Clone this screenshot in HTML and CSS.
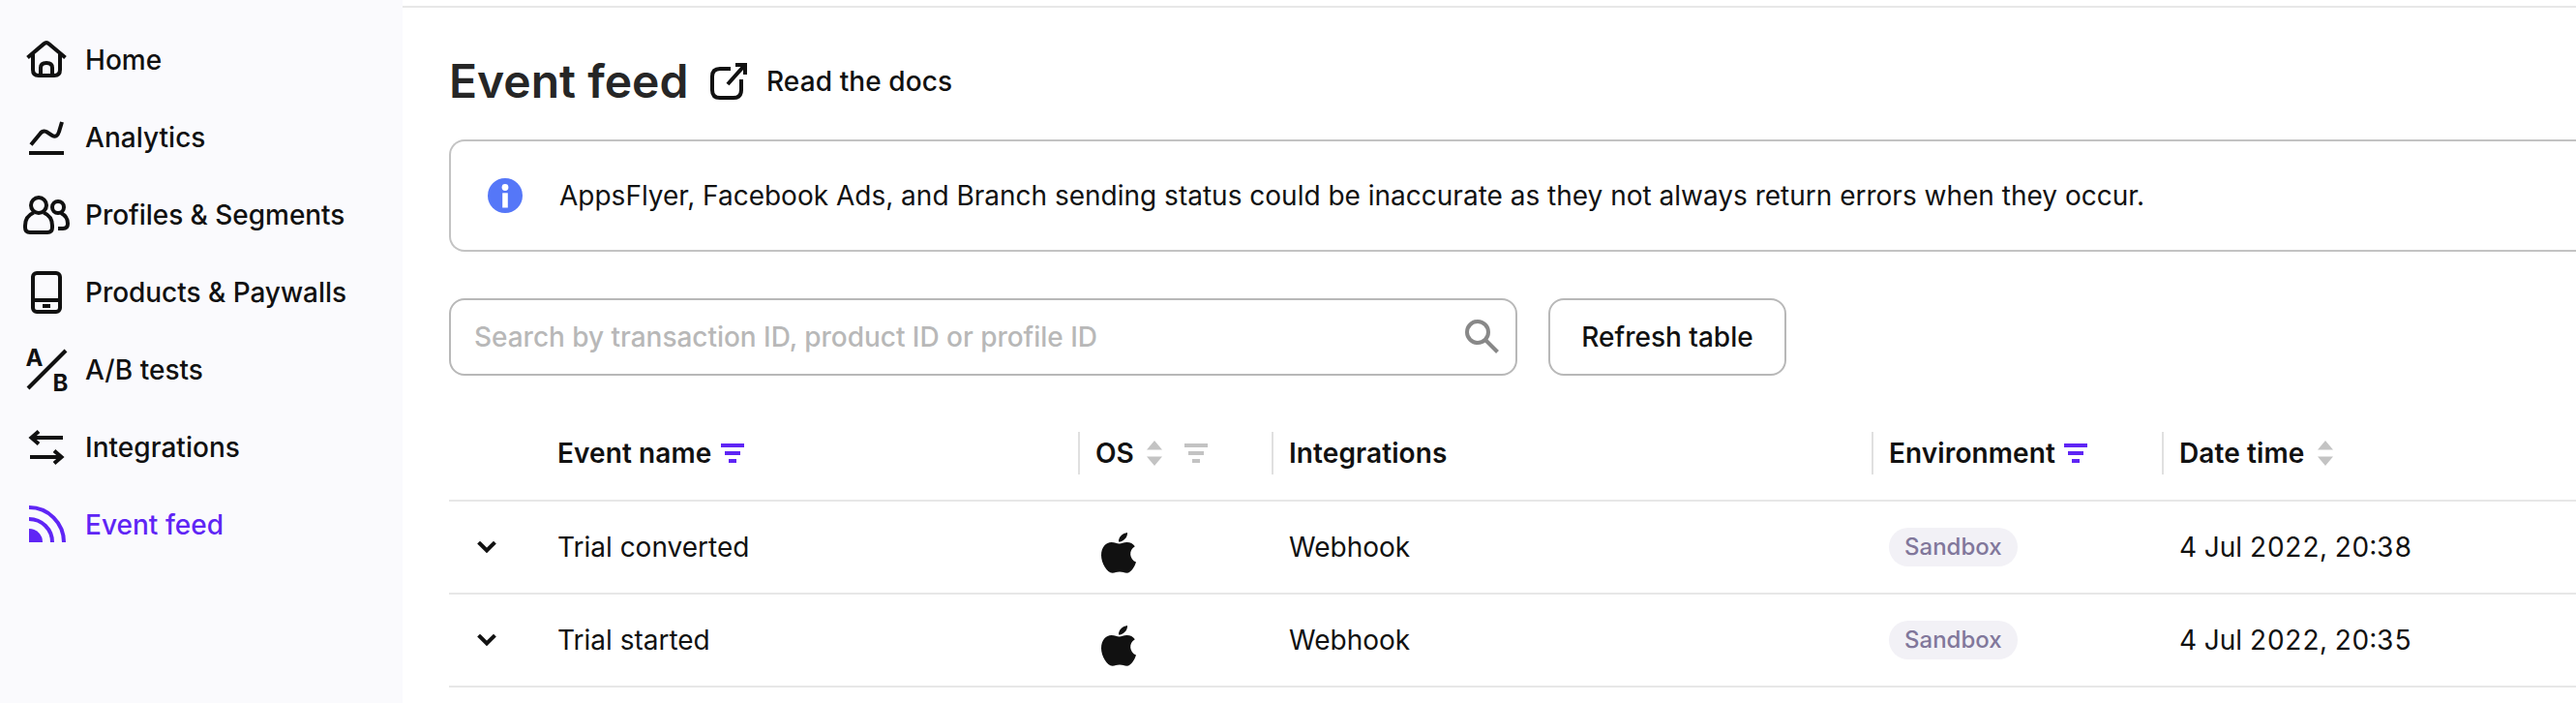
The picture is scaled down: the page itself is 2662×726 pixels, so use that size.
FILE: index.html
```html
<!DOCTYPE html>
<html lang="en">
<head>
<meta charset="utf-8">
<title>Event feed</title>
<link rel="stylesheet" href="styles.css">
</head>
<body>
<div class="app">
  <nav class="sidebar">
    <a class="nav-item"><svg class="nav-icon" viewBox="0 0 48 48"><path d="M4.500 21.500 21.200 7.400Q24 5 26.800 7.400L43.500 21.500M10 18V34Q10 40 16 40H32Q38 40 38 34V18M18 40V32Q18 27 24 27T30 32V40"/></svg><span>Home</span></a>
    <a class="nav-item"><svg class="nav-icon" viewBox="0 0 48 48"><path d="M8 31.500 17.500 20Q20 16.500 24 18L30 22Q35 24.500 37 18L40 8M6 40H42"/></svg><span>Analytics</span></a>
    <a class="nav-item"><svg class="nav-icon" viewBox="0 0 48 48"><circle cx="16" cy="14" r="8"/><circle cx="36" cy="16" r="6"/><path d="M11 21.500C5 24 2 29 2 35V37Q2 42 7 42H25Q30 42 30 37V35C30 29 27 24 21 21.500M39 22C43 24 46 28 46 33Q46 38 41 38H36"/></svg><span class="tight">Profiles &amp; Segments</span></a>
    <a class="nav-item"><svg class="nav-icon" viewBox="0 0 48 48"><rect x="10" y="4" width="28" height="40" rx="4"/><path d="M10 32H38M20 38H28"/></svg><span class="tight">Products &amp; Paywalls</span></a>
    <a class="nav-item"><svg class="nav-icon" viewBox="0 0 48 48"><path d="M5 43 44 4"/><text class="ab" x="2.500" y="20">A</text><text class="ab" x="30.500" y="46">B</text></svg><span>A/B tests</span></a>
    <a class="nav-item"><svg class="nav-icon" viewBox="0 0 48 48"><path d="M8 14H41M16 7.500 8.500 14 16 20.500M7 34H40M32 27.500 39.500 34 32 40.500"/></svg><span>Integrations</span></a>
    <a class="nav-item active"><svg class="nav-icon" viewBox="0 0 48 48"><path d="M6 6A36 36 0 0 1 42 42M6 18A24 24 0 0 1 30 42"/><path class="solid" d="M6 28A14 14 0 0 1 20 42H6Z"/></svg><span>Event feed</span></a>
  </nav>
  <main class="main">
    <header class="page-head">
      <h1 class="title">Event feed</h1>
      <a class="docs"><svg class="docs-icon" viewBox="0 0 38 38"><path d="M21 6H10Q2 6 2 14V28Q2 36 10 36H24Q32 36 32 28V17M18 22 35 3M26 2H36V12"/></svg><span>Read the docs</span></a>
    </header>
    <section class="notice">
      <svg class="info" viewBox="0 0 36 36"><circle class="info-bg" cx="18" cy="18" r="18"/><circle cx="18" cy="9.500" r="3.400" fill="#fff"/><path d="M15.200 15.300H20.800V30.500H15.200Z" fill="#fff"/></svg>
      <span class="notice-text">AppsFlyer, Facebook Ads, and Branch sending status could be inaccurate as they not always return errors when they occur.</span>
    </section>
    <div class="toolbar">
      <div class="search"><span class="placeholder">Search by transaction ID, product ID or profile ID</span><svg class="search-icon" viewBox="0 0 36 36"><circle cx="13" cy="13" r="11"/><path d="M20.500 20.500 33.500 33.500"/></svg></div>
      <button class="refresh">Refresh table</button>
    </div>
    <div class="table">
      <div class="row head">
        <span class="cell"></span>
        <span class="cell"><b>Event name</b><svg class="filter on name-filter" viewBox="0 0 24 20"><path d="M0 0H24V4H0ZM4 8H20V12H4ZM8 16H16V20H8Z"/></svg></span>
        <span class="cell sep"><b>OS</b><svg class="sort" viewBox="0 0 16 26"><path d="M0 9.500 8 0 16 9.500ZM0 16.500H16L8 26Z"/></svg><svg class="filter os-filter" viewBox="0 0 24 20"><path d="M0 0H24V4H0ZM4 8H20V12H4ZM8 16H16V20H8Z"/></svg></span>
        <span class="cell sep"><b>Integrations</b></span>
        <span class="cell sep"><b>Environment</b><svg class="filter on" viewBox="0 0 24 20"><path d="M0 0H24V4H0ZM4 8H20V12H4ZM8 16H16V20H8Z"/></svg></span>
        <span class="cell sep"><b>Date time</b><svg class="sort date-sort" viewBox="0 0 16 26"><path d="M0 9.500 8 0 16 9.500ZM0 16.500H16L8 26Z"/></svg></span>
      </div>
      <div class="row">
        <span class="cell"><svg class="chevron" viewBox="0 0 18 12"><path d="M2 2.500 9 9.500 16 2.500"/></svg></span>
        <span class="cell">Trial converted</span>
        <span class="cell"><svg class="apple" viewBox="0 0 36 42"><path d="M18 9.600C17.600 4.800 22 .6 27 0 27.500 4.800 23 9.600 18 9.600ZM18.500 11.400C21 11.400 23 10 26.500 10 30 10 33 11.600 34.800 14.200 28 18 29 27.500 36 30.500 34.500 35 31 41.700 26.500 41.700 23.500 41.700 22.500 40.500 19 40.500S14.500 41.700 11.500 41.700C6 41.700 0 31.500 0 23.500 0 15 5 10 10.500 10 14 10 16.500 11.400 18.500 11.400Z"/></svg></span>
        <span class="cell">Webhook</span>
        <span class="cell"><span class="tag">Sandbox</span></span>
        <span class="cell date">4 Jul 2022, 20:38</span>
      </div>
      <div class="row">
        <span class="cell"><svg class="chevron" viewBox="0 0 18 12"><path d="M2 2.500 9 9.500 16 2.500"/></svg></span>
        <span class="cell">Trial started</span>
        <span class="cell"><svg class="apple" viewBox="0 0 36 42"><path d="M18 9.600C17.600 4.800 22 .6 27 0 27.500 4.800 23 9.600 18 9.600ZM18.500 11.400C21 11.400 23 10 26.500 10 30 10 33 11.600 34.800 14.200 28 18 29 27.500 36 30.500 34.500 35 31 41.700 26.500 41.700 23.500 41.700 22.500 40.500 19 40.500S14.500 41.700 11.500 41.700C6 41.700 0 31.500 0 23.500 0 15 5 10 10.500 10 14 10 16.500 11.400 18.500 11.400Z"/></svg></span>
        <span class="cell">Webhook</span>
        <span class="cell"><span class="tag">Sandbox</span></span>
        <span class="cell date">4 Jul 2022, 20:35</span>
      </div>
    </div>
  </main>
</div>
</body>
</html>
```
FILE: styles.css
```css
* { box-sizing: border-box; }
body { margin: 0; background: #fff; color: #111; font: 400 28px/40px Inter, sans-serif; }
svg { display: block; flex: none; overflow: visible; }
.app { display: flex; height: 726px; overflow: hidden; }
.sidebar { flex: none; width: 416px; padding: 22px 24px; background: #fafafd; }
.nav-item { display: flex; align-items: center; gap: 16px; height: 80px; font-weight: 500; letter-spacing: 0.03px; white-space: nowrap; color: #111; }
.nav-item .tight { letter-spacing: -0.04px; }
.nav-item.active { color: #5f25f5; }
.nav-icon { width: 48px; height: 48px; fill: none; stroke: currentColor; stroke-width: 4; }
.nav-icon .solid { fill: currentColor; stroke: none; }
.ab { font: 700 24px Inter, sans-serif; fill: currentColor; stroke: none; }
.main { flex: 1; min-width: 0; margin-top: 6px; padding-left: 48px; border-top: 2px solid #e7e7e7; }
.page-head { display: flex; align-items: center; height: 136px; padding-top: 16px; }
.title { width: 270px; margin: 0; font-size: 48px; line-height: 56px; font-weight: 600; color: #262626; white-space: nowrap; }
.docs { display: flex; align-items: center; gap: 20px; font-weight: 500; letter-spacing: 0.1px; }
.docs-icon { width: 38px; height: 38px; fill: none; stroke: #111; stroke-width: 4; }
.notice { display: flex; align-items: center; gap: 38px; height: 116px; padding-left: 38px; border: 2px solid #c3c3c3; border-right: 0; border-radius: 16px 0 0 16px; white-space: nowrap; }
.info { width: 36px; height: 36px; }
.info-bg { fill: #5577f8; }
.toolbar { display: flex; gap: 32px; margin-top: 48px; }
.search { display: flex; align-items: center; justify-content: space-between; width: 1104px; height: 80px; padding: 0 16px 0 24px; border: 2px solid #b8b8b8; border-radius: 16px; color: #b8b8b8; }
.placeholder { font-weight: 500; letter-spacing: -0.03px; }
.search-icon { width: 36px; height: 36px; fill: none; stroke: #888; stroke-width: 4; }
.refresh { width: 246px; height: 80px; padding: 0; border: 2px solid #b8b8b8; border-radius: 16px; background: #fff; color: #111; font: 500 28px/40px Inter, sans-serif; }
.table { margin-top: 32px; }
.row { display: grid; grid-template-columns: 112px 556px 200px 620px 300px 1fr; align-items: center; height: 96px; border-bottom: 2px solid #e7e7e7; white-space: nowrap; }
.row.head { height: 98px; }
.cell { display: flex; align-items: center; height: 44px; }
.head .sep { position: relative; }
.head .sep::before { content: ""; position: absolute; left: -18px; top: 0; width: 2px; height: 44px; background: #e0e0e0; }
.head b { font-weight: 600; letter-spacing: 0.1px; }
.filter { width: 24px; height: 20px; margin-left: 9px; fill: #c3c3c3; }
.filter.on { fill: #5f25f5; }
.name-filter { margin-left: 10px; }
.sort { width: 16px; height: 26px; margin-left: 13px; fill: #c3c3c3; }
.date-sort { margin-left: 14px; }
.os-filter { margin-left: 23px; }
.chevron { width: 18px; height: 12px; margin-left: 30px; fill: none; stroke: #111; stroke-width: 4; stroke-linecap: square; }
.apple { width: 36px; height: 42px; margin: 12px 0 0 6px; fill: #111; }
.date { font-variant-numeric: tabular-nums; }
.tag { height: 40px; padding: 0 16px; border-radius: 20px; background: #f2f1f6; color: #81779b; font-size: 24px; font-weight: 500; line-height: 40px; }
```
